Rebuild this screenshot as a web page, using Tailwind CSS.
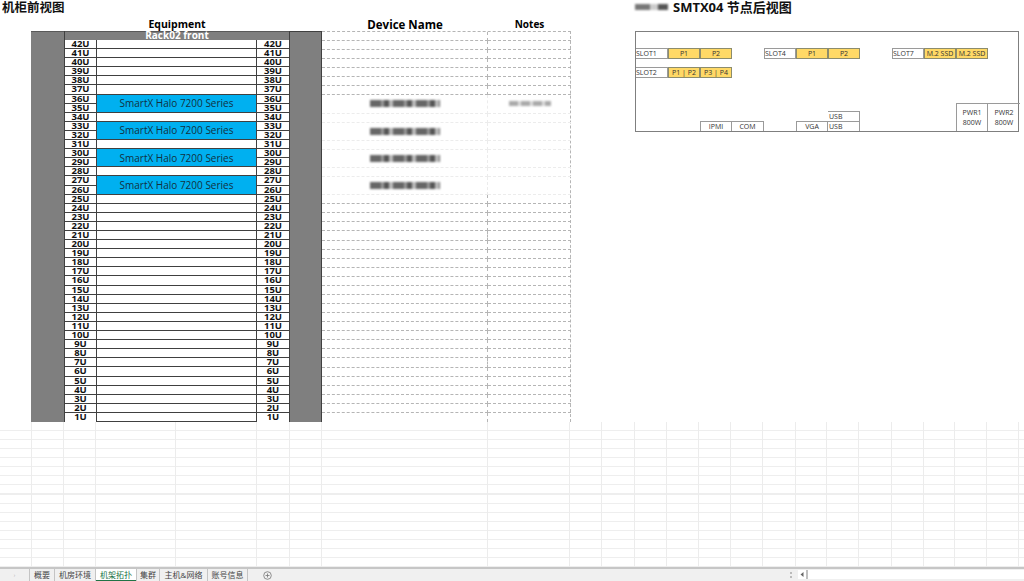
<!DOCTYPE html>
<html lang="zh-CN">
<head>
    <meta charset="UTF-8">
    <title>机架拓扑</title>
    <script src="https://cdn.jsdelivr.net/npm/@tailwindcss/browser@4"></script>
</head>
<body class="bg-white overflow-hidden">
<div class="w-[1024px] h-[581px] flex flex-col font-['Open_Sans','Noto_Sans_CJK_SC',sans-serif] text-black">

    <!-- sheet content -->
    <div class="flex h-[422px] shrink-0">
        <div class="w-[635px] shrink-0">
            <div class="h-[18px] pl-[2px] text-[12.5px] leading-[15px] font-bold text-[#111]">机柜前视图</div>
            <div class="flex h-[13px] pl-[64px] font-bold leading-[13px] items-center text-center">
                <div class="w-[226px] text-[10.5px]">Equipment</div>
                <div class="w-[32px]"></div>
                <div class="w-[166px] text-[11.5px]">Device Name</div>
                <div class="w-[83px] text-[10px]">Notes</div>
            </div>
            <div class="flex h-[391px] pl-[31px]">
                <div class="w-[33px] bg-[#7f7f7f] border-t border-[#595959]"></div>
                <div class="w-[226px] flex flex-col border-x border-[#404040]">
                    <div class="relative z-10 h-[9px] bg-[#7f7f7f] border-t border-[#595959] text-white text-[10px] font-bold leading-[6px] text-center">Rack02 front</div>
                    <div id="rack" class="flex-1 grid grid-cols-[31px_161px_32px] grid-rows-[repeat(42,1fr)] min-h-0"></div>
                </div>
                <div class="w-[32px] bg-[#7f7f7f] border-t border-r border-[#404040]"></div>
                <div id="names" class="w-[249px] grid grid-cols-[166px_83px] grid-rows-[9px_repeat(42,1fr)] border-t border-r border-dashed border-[#b5b5b5]"></div>
            </div>
        </div>

        <div class="flex-1 min-w-0">
            <div class="h-[31px] flex items-start gap-[5px] text-[13px] leading-[15px] font-bold text-[#111]">
                <div class="w-[33px] h-[6px] mt-[4px] blur-[1px] bg-[linear-gradient(90deg,#777_0,#777_15px,#ccc_15px,#ccc_23px,#555_23px,#555_33px)]"></div>
                <span>SMTX04 节点后视图</span>
            </div>
            <div class="w-[384px] h-[101px] border border-[#7f7f7f] grid grid-cols-[repeat(12,32px)] grid-rows-[repeat(11,1fr)] text-[7px] leading-[9px] text-[#333]">
                <div class="col-start-1 row-start-3 border-y border-r border-[#9a9a9a] whitespace-nowrap">SLOT1</div>
                <div class="col-start-2 row-start-3 border border-[#8c8c6c] bg-[#ffd966] text-center whitespace-nowrap">P1</div>
                <div class="col-start-3 row-start-3 border border-[#8c8c6c] bg-[#ffd966] text-center whitespace-nowrap">P2</div>
                <div class="col-start-5 row-start-3 border border-[#9a9a9a] whitespace-nowrap">SLOT4</div>
                <div class="col-start-6 row-start-3 border border-[#8c8c6c] bg-[#ffd966] text-center whitespace-nowrap">P1</div>
                <div class="col-start-7 row-start-3 border border-[#8c8c6c] bg-[#ffd966] text-center whitespace-nowrap">P2</div>
                <div class="col-start-9 row-start-3 border border-[#9a9a9a] whitespace-nowrap">SLOT7</div>
                <div class="col-start-10 row-start-3 border border-[#8c8c6c] bg-[#ffd966] text-center whitespace-nowrap">M.2 SSD</div>
                <div class="col-start-11 row-start-3 border border-[#8c8c6c] bg-[#ffd966] text-center whitespace-nowrap">M.2 SSD</div>

                <div class="col-start-1 row-start-5 border-y border-r border-[#9a9a9a] whitespace-nowrap">SLOT2</div>
                <div class="col-start-2 row-start-5 border border-[#8c8c6c] bg-[#ffd966] text-center whitespace-nowrap">P1 | P2</div>
                <div class="col-start-3 row-start-5 border border-[#8c8c6c] bg-[#ffd966] text-center whitespace-nowrap">P3 | P4</div>

                <div class="col-start-3 row-start-11 border-t border-x border-[#9a9a9a] text-center whitespace-nowrap">IPMI</div>
                <div class="col-start-4 row-start-11 border-t border-r border-[#9a9a9a] text-center whitespace-nowrap">COM</div>
                <div class="col-start-6 row-start-11 border-t border-x border-[#9a9a9a] text-center whitespace-nowrap">VGA</div>
                <div class="col-start-7 row-start-10 border-t border-r border-[#9a9a9a] pl-[1px] whitespace-nowrap">USB</div>
                <div class="col-start-7 row-start-11 border-t border-r border-[#9a9a9a] pl-[1px] whitespace-nowrap">USB</div>
                <div class="col-start-11 row-start-9 row-span-3 border-t border-x border-[#9a9a9a] flex flex-col justify-center items-center gap-[1px]"><span>PWR1</span><span>800W</span></div>
                <div class="col-start-12 row-start-9 row-span-3 border-t border-[#9a9a9a] flex flex-col justify-center items-center gap-[1px]"><span>PWR2</span><span>800W</span></div>
            </div>
        </div>
    </div>

    <!-- empty cells under the tables -->
    <div id="cells" class="flex-1 min-h-0 flex bg-[repeating-linear-gradient(to_bottom,transparent_0,transparent_8px,#eeeeee_8px,#eeeeee_9.07px)]"></div>

    <!-- sheet tabs -->
    <div class="h-[14px] shrink-0 flex items-stretch bg-[#f0f0f0] border-t-2 border-[#c6c6c6] text-[8px] leading-[11px] text-[#444]">
        <div class="w-[30px] flex items-center justify-center text-[5px] text-[#aaa] border-r border-[#c4c4c4]">›</div>
        <div class="w-[25px] text-center border-r border-[#c4c4c4]">概要</div>
        <div class="w-[41px] text-center border-r border-[#c4c4c4]">机房环境</div>
        <div class="w-[40px] text-center bg-white text-[#217346] border-b border-[#217346]">机架拓扑</div>
        <div class="w-[24px] text-center border-x border-[#c4c4c4]">集群</div>
        <div class="w-[48px] text-center border-r border-[#c4c4c4]">主机&amp;网络</div>
        <div class="w-[40px] text-center border-r border-[#c4c4c4]">账号信息</div>
        <div class="w-[38px] flex items-center justify-center">
            <svg width="9" height="9" viewBox="0 0 9 9" fill="none" stroke="#777" stroke-width="0.8"><circle cx="4.5" cy="4.5" r="3.8"/><path d="M4.5 2.5v4M2.5 4.5h4"/></svg>
        </div>
        <div class="flex-1"></div>
        <div class="w-[7px] mr-[4px] flex flex-col items-center justify-center gap-[2px]"><span class="w-[2px] h-[2px] bg-[#bbb]"></span><span class="w-[2px] h-[2px] bg-[#bbb]"></span></div>
        <div class="w-[226px] shrink-0 flex pt-[1px] pb-[2px]">
            <div class="w-[10px] bg-white border-r-2 border-[#c0c0c0] flex items-center justify-center">
                <svg width="4" height="5" viewBox="0 0 4 5"><path d="M3.5 0v5L0.5 2.5z" fill="#666"/></svg>
            </div>
            <div class="flex-1 bg-white"></div>
        </div>
    </div>
</div>

<script>
    const rack = document.getElementById('rack');
    const names = document.getElementById('names');
    const cells = document.getElementById('cells');
    const servers = [36, 33, 30, 27];

    const label = (u, last) => `<div class="${last ? '' : 'border-b border-[#404040]'} text-[9.5px] font-bold leading-[8px] text-center text-[#111]">${u}U</div>`;

    const nameBlob = '<div class="w-[70px] h-[7px] blur-[1px] bg-[repeating-linear-gradient(90deg,#666_0,#666_11px,#999_11px,#999_14px,#555_14px,#555_19px,#bbb_19px,#bbb_23px)]"></div>';
    const noteBlob = '<div class="w-[42px] h-[5px] blur-[1px] bg-[repeating-linear-gradient(90deg,#aaa_0,#aaa_9px,#ddd_9px,#ddd_12px)]"></div>';

    let rackHtml = '';
    let namesHtml = '<div class="border-b border-r border-dashed border-[#b5b5b5]"></div><div class="border-b border-dashed border-[#b5b5b5]"></div>';

    for (let u = 42; u >= 1; u--) {
        const isTop = servers.includes(u);
        const isBottom = servers.includes(u + 1);
        const faint = u <= 36 && u >= 26;
        const line = faint ? 'border-[#ececec]' : 'border-[#b5b5b5]';
        const lastDashed = u === 26 ? 'border-[#b5b5b5]' : line;

        rackHtml += label(u, u === 1);
        if (isTop) {
            rackHtml += '<div class="row-span-2 bg-[#00b0f0] border-x border-b border-[#404040] pt-[1px] flex items-center justify-center text-[10px] text-[#12303f] whitespace-nowrap">SmartX Halo 7200 Series</div>';
        } else if (!isBottom) {
            rackHtml += `<div class="bg-white border-x border-b border-[#404040]"></div>`;
        }
        rackHtml += label(u, u === 1);

        if (isTop) {
            namesHtml += `<div class="row-span-2 border-b border-r border-dashed ${line} flex items-center justify-center">${nameBlob}</div>`;
            namesHtml += `<div class="row-span-2 border-b border-dashed ${line} flex items-center justify-center">${u === 36 ? noteBlob : ''}</div>`;
        } else if (!isBottom) {
            const bottom = u === 1 ? '' : `border-b border-dashed ${lastDashed}`;
            namesHtml += `<div class="${bottom} border-r border-dashed ${line}"></div><div class="${bottom}"></div>`;
        }
    }
    rack.innerHTML = rackHtml;
    names.innerHTML = namesHtml;

    // column widths of the empty worksheet cells
    [32, 32, 32, 80, 81, 33, 32, 166, 82, 32, 33, 32, 32, 32, 32, 33, 31, 32, 33, 32, 31, 32, 32].forEach(w => {
        const col = document.createElement('div');
        col.className = 'shrink-0 border-r border-[#ececec]';
        col.style.width = w + 'px';
        cells.appendChild(col);
    });
</script>
</body>
</html>
